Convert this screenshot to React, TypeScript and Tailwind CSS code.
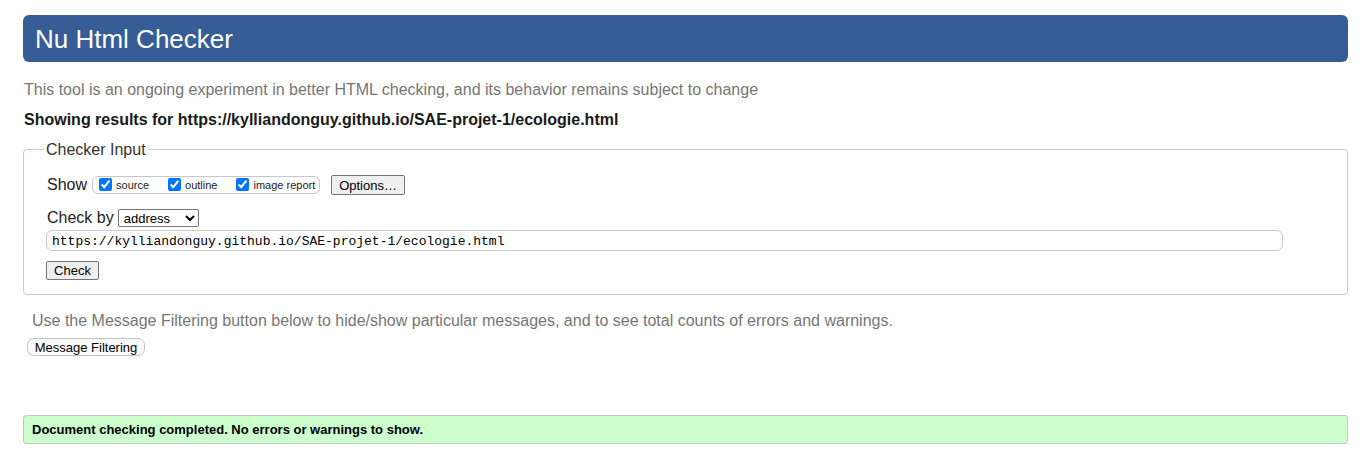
import { useState } from 'react';

const URL = 'https://kylliandonguy.github.io/SAE-projet-1/ecologie.html';

export default function App() {
  const [opts, setOpts] = useState({ source: true, outline: true, image: true });
  const [url, setUrl] = useState(URL);

  const toggle = (k: 'source' | 'outline' | 'image') =>
    setOpts({ ...opts, [k]: !opts[k] });

  return (
    <div className="bg-white min-h-[454px] pt-[15px] pl-[23px] pr-[17px] font-['Liberation_Sans',Arial,sans-serif] text-[#222]">
      {/* Header */}
      <div className="h-[47px] rounded-[6px] bg-[#365d95] pl-[12px] flex items-center">
        <h1 className="text-[26px] leading-none text-white font-normal">Nu Html Checker</h1>
      </div>

      <p className="mt-[19px] ml-[1px] text-[16px] leading-[18px] text-[#767676]">
        This tool is an ongoing experiment in better HTML checking, and its behavior remains subject to change
      </p>
      <p className="mt-[12px] ml-[1px] text-[16px] leading-[18px] font-bold text-[#1a1a1a]">
        Showing results for {URL}
      </p>

      {/* Checker Input */}
      <fieldset className="mt-[11px] border border-[#cccccc] rounded-[4px] pl-[23px] pr-[23px] pb-[14px]">
        <legend className="-ml-[3px] px-[2px] pt-[1px] text-[16px] leading-[18px] text-[#333]">Checker Input</legend>

        <div className="mt-[16px] flex items-center h-[20px]">
          <span className="text-[16px] leading-[18px] text-[#222]">Show</span>
          <div className="ml-[5px] h-[18px] w-[228px] border border-[#c8c8c8] rounded-[6px] flex items-center pl-[6px] text-[11px] leading-none text-[#222]">
            <label className="flex items-center">
              <input type="checkbox" checked={opts.source} onChange={() => toggle('source')} className="w-[13px] h-[13px] m-0 -mt-[2px]" />
              <span className="ml-[4px] mt-[1px]">source</span>
            </label>
            <label className="flex items-center ml-[19px]">
              <input type="checkbox" checked={opts.outline} onChange={() => toggle('outline')} className="w-[13px] h-[13px] m-0 -mt-[2px]" />
              <span className="ml-[4px] mt-[1px]">outline</span>
            </label>
            <label className="flex items-center ml-[19px]">
              <input type="checkbox" checked={opts.image} onChange={() => toggle('image')} className="w-[13px] h-[13px] m-0 -mt-[2px]" />
              <span className="ml-[4px] mt-[1px]">image report</span>
            </label>
          </div>
          <button className="ml-[11px] h-[20px] w-[74px] bg-[#efefef] border border-[#767676] rounded-[2px] text-[13px] leading-none text-black">
            Options…
          </button>
        </div>

        <div className="mt-[14px] flex items-center h-[18px]">
          <span className="text-[16px] leading-[18px] text-[#222]">Check by</span>
          <select className="ml-[4px] h-[18px] w-[81px] border border-[#767676] rounded-[2px] bg-white text-[13px] leading-none text-black pl-[1px]">
            <option>address</option>
            <option>file upload</option>
            <option>text input</option>
          </select>
        </div>

        <input
          value={url}
          onChange={(e) => setUrl(e.target.value)}
          className="mt-[3px] -ml-[1px] block h-[21px] w-[1237px] border border-[#cccccc] rounded-[6px] px-[5px] pt-[1px] text-[13px] leading-none text-black font-['Liberation_Mono','DejaVu_Sans_Mono',monospace] outline-none"
        />

        <button className="mt-[10px] -ml-[1px] block h-[19px] w-[53px] bg-[#efefef] border border-[#767676] rounded-[2px] text-[13px] leading-none text-black">
          Check
        </button>
      </fieldset>

      <p className="mt-[17px] ml-[9px] text-[16px] leading-[18px] text-[#767676]">
        Use the Message Filtering button below to hide/show particular messages, and to see total counts of errors and warnings.
      </p>
      <button className="mt-[8px] ml-[4px] block h-[18px] w-[118px] bg-[#fafafa] border border-[#c4c4c4] rounded-[7px] text-[13px] leading-none text-black">
        Message Filtering
      </button>

      {/* Result */}
      <div className="mt-[59px] h-[29px] flex items-center border border-[#c8c8c8] rounded-[3px] bg-[#ccffcc] pl-[8px]">
        <p className="text-[13px] leading-none font-bold text-black">
          Document checking completed. No errors or warnings to show.
        </p>
      </div>
    </div>
  );
}
